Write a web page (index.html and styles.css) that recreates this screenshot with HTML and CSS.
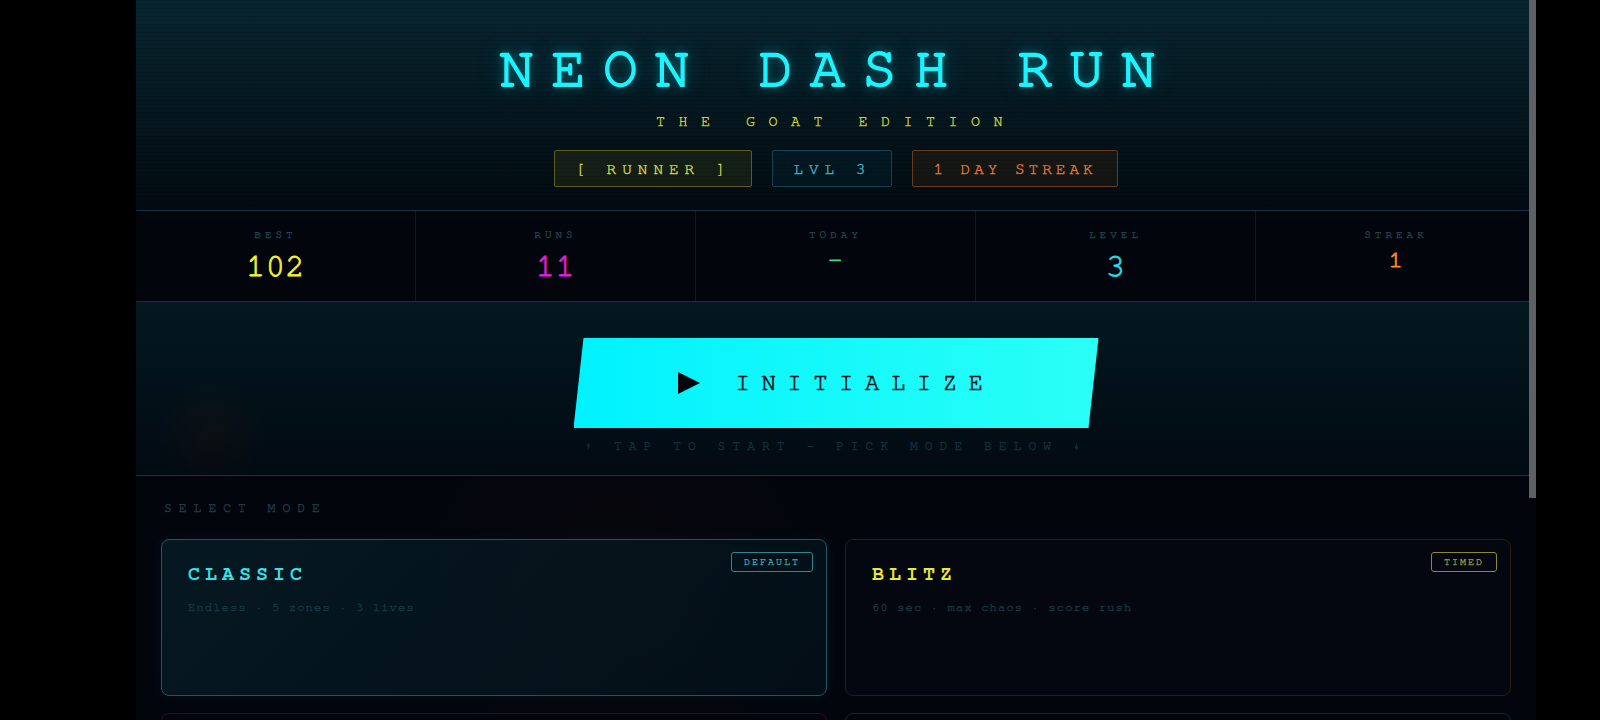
FILE: index.html
```html
<!DOCTYPE html>
<html lang="en">
<head>
    <meta charset="UTF-8">
    <meta name="viewport" content="width=device-width, initial-scale=1.0">
    <title>Neon Dash Run</title>
    <link rel="stylesheet" href="styles.css">
</head>
<body>
    <div class="app">
        <header class="hero">
            <h1 class="title">NEON DASH RUN</h1>
            <p class="subtitle">THE GOAT EDITION</p>
            <div class="badges">
                <span class="badge badge-rank">[ RUNNER ]</span>
                <span class="badge badge-level">LVL 3</span>
                <span class="badge badge-streak">1 DAY STREAK</span>
            </div>
        </header>

        <section class="stats">
            <div class="stat">
                <span class="stat-label">BEST</span>
                <span class="stat-value best">102</span>
            </div>
            <div class="stat">
                <span class="stat-label">RUNS</span>
                <span class="stat-value runs">11</span>
            </div>
            <div class="stat">
                <span class="stat-label">TODAY</span>
                <span class="stat-value small today">-</span>
            </div>
            <div class="stat">
                <span class="stat-label">LEVEL</span>
                <span class="stat-value level">3</span>
            </div>
            <div class="stat">
                <span class="stat-label">STREAK</span>
                <span class="stat-value small streak">1</span>
            </div>
        </section>

        <section class="launch">
            <button class="start-btn">
                <svg class="play" width="22" height="22" viewBox="0 0 22 22"><polygon points="0,0 22,11 0,22" fill="#02070c"/></svg>
                INITIALIZE
            </button>
            <p class="hint">↑ TAP TO START - PICK MODE BELOW ↓</p>
        </section>

        <section class="modes">
            <h3 class="modes-label">SELECT MODE</h3>
            <div class="mode-grid">
                <div class="mode-card cyan active">
                    <span class="tag">DEFAULT</span>
                    <h4 class="mode-name">CLASSIC</h4>
                    <p class="mode-desc">Endless · 5 zones · 3 lives</p>
                </div>
                <div class="mode-card yellow">
                    <span class="tag">TIMED</span>
                    <h4 class="mode-name">BLITZ</h4>
                    <p class="mode-desc">60 sec · max chaos · score rush</p>
                </div>
                <div class="mode-card magenta"></div>
                <div class="mode-card teal"></div>
            </div>
        </section>

        <div class="scroll-thumb"></div>
    </div>
</body>
</html>
```

FILE: styles.css
```css
body {
    margin: 0;
    background: #000;
    font-family: "Nimbus Mono PS", "Nimbus Mono L", "FreeMono", "Courier", "Liberation Mono", monospace;
    -webkit-text-stroke: 0.4px currentColor;
}
.app {
    position: relative;
    width: 1400px;
    height: 720px;
    margin-left: 136px;
    overflow: hidden;
    background: #03050d;
}

/* header */
.hero {
    height: 211px;
    box-sizing: border-box;
    padding-top: 40px;
    text-align: center;
    border-bottom: 1px solid #0f3440;
    background:
        repeating-linear-gradient(180deg, rgba(0, 0, 0, 0.16) 0 1px, transparent 1px 4px),
        linear-gradient(180deg, #072632 0%, #04171f 55%, #020a12 100%);
}
.title {
    margin: 0;
    font-size: 58px;
    line-height: 1;
    font-weight: 400;
    letter-spacing: 17px;
    color: #1af4ff;
    -webkit-text-stroke: 1.8px #1af4ff;
    text-shadow: 0 0 8px rgba(0, 255, 255, 0.55), 0 0 26px rgba(0, 210, 255, 0.4);
}
.subtitle {
    margin: 16px 0 0;
    font-size: 15px;
    letter-spacing: 13.5px;
    color: #c8d03c;
}
.badges {
    display: flex;
    justify-content: center;
    gap: 20px;
    margin-top: 21px;
}
.badge {
    height: 37px;
    box-sizing: border-box;
    padding: 0 20px;
    display: flex;
    align-items: center;
    font-size: 16px;
    letter-spacing: 6px;
    border: 1px solid;
    border-radius: 2px;
}
.badge-rank {
    color: #d5d84a;
    border-color: #5c5c1a;
    background: rgba(140, 140, 20, 0.12);
}
.badge-level {
    color: #3bb8c8;
    border-color: #124450;
    background: rgba(0, 120, 140, 0.08);
}
.badge-streak {
    color: #e07a30;
    border-color: #6a3a14;
    background: rgba(150, 70, 10, 0.12);
    letter-spacing: 4px;
}

/* stats */
.stats {
    display: grid;
    grid-template-columns: repeat(5, 1fr);
    height: 91px;
    box-sizing: border-box;
    background: #03050c;
    border-bottom: 1px solid #0f3440;
}
.stat {
    display: flex;
    flex-direction: column;
    align-items: center;
    padding-top: 18px;
    border-right: 1px solid #0c1a20;
}
.stat:last-child {
    border-right: none;
}
.stat-label {
    font-size: 11px;
    letter-spacing: 4px;
    color: #1d434c;
}
.stat-value {
    margin-top: 9px;
    font-size: 32px;
    line-height: 34px;
    letter-spacing: 0.5px;
    -webkit-text-stroke: 0.8px currentColor;
}
.stat-value.small {
    margin-top: 6px;
    font-size: 24px;
    line-height: 28px;
}
.best { color: #f4f42a; }
.runs { color: #e020e0; }
.today { color: #33dd88; }
.level { color: #22dde8; }
.streak { color: #ff8c1a; }

/* launch */
.launch {
    height: 174px;
    box-sizing: border-box;
    padding-top: 36px;
    border-bottom: 1px solid #163440;
    background:
        radial-gradient(circle at 75px 130px, rgba(90, 40, 0, 0.1), transparent 55px),
        linear-gradient(180deg, #031820 0%, #020a12 100%);
}
.start-btn {
    display: flex;
    align-items: center;
    justify-content: center;
    width: 525px;
    height: 90px;
    margin: 0 auto;
    border: none;
    clip-path: polygon(10px 0, 100% 0, calc(100% - 10px) 100%, 0 100%);
    background: linear-gradient(90deg, #00f2ff, #2afff6);
    font-family: inherit;
    font-size: 24px;
    letter-spacing: 11.5px;
    color: #04121a;
    -webkit-text-stroke: 0.6px #04121a;
    cursor: pointer;
}
.play {
    margin-right: 36px;
}
.hint {
    margin: 12px 0 0;
    text-align: center;
    font-size: 13px;
    letter-spacing: 7px;
    color: #12303a;
}

/* modes */
.modes {
    padding: 26px 25px 0;
    background: radial-gradient(circle at 480px 110px, rgba(80, 25, 10, 0.07), transparent 200px);
}
.modes-label {
    margin: 0 0 24px 3px;
    font-weight: normal;
    font-size: 13px;
    letter-spacing: 7px;
    color: #1c3d46;
}
.mode-grid {
    display: grid;
    grid-template-columns: 1fr 1fr;
    gap: 17px 18px;
}
.mode-card {
    position: relative;
    height: 157px;
    box-sizing: border-box;
    padding: 24px 26px;
    border: 1px solid;
    border-radius: 8px;
}
.mode-name {
    margin: 0;
    font-size: 20px;
    font-weight: 700;
    letter-spacing: 5px;
    -webkit-text-stroke: 0;
}
.mode-desc {
    margin: 17px 0 0;
    font-size: 12px;
    letter-spacing: 1.2px;
    color: #15393f;
}
.tag {
    position: absolute;
    top: 12px;
    right: 13px;
    padding: 4px 12px;
    font-size: 10px;
    letter-spacing: 2px;
    border: 1px solid;
    border-radius: 3px;
}
.mode-card.cyan {
    border-color: #175a60;
    background: linear-gradient(135deg, rgba(10, 60, 70, 0.35), rgba(3, 20, 28, 0.6));
    box-shadow: 0 0 14px rgba(0, 200, 220, 0.06);
}
.mode-card.cyan .mode-name { color: #36e2ea; }
.mode-card.cyan .tag { color: #3a9aa0; border-color: #2a8a90; }
.mode-card.yellow {
    border-color: #22220e;
    background: rgba(6, 10, 20, 0.5);
}
.mode-card.yellow .mode-name { color: #eaea2e; }
.mode-card.yellow .tag { color: #8f8f3a; border-color: #8a8a2a; }
.mode-card.magenta { border-color: #2a0d2a; }
.mode-card.teal { border-color: #0d2a30; }

.scroll-thumb {
    position: absolute;
    top: 0;
    right: 0;
    width: 7px;
    height: 498px;
    background: #5d6166;
}
```
